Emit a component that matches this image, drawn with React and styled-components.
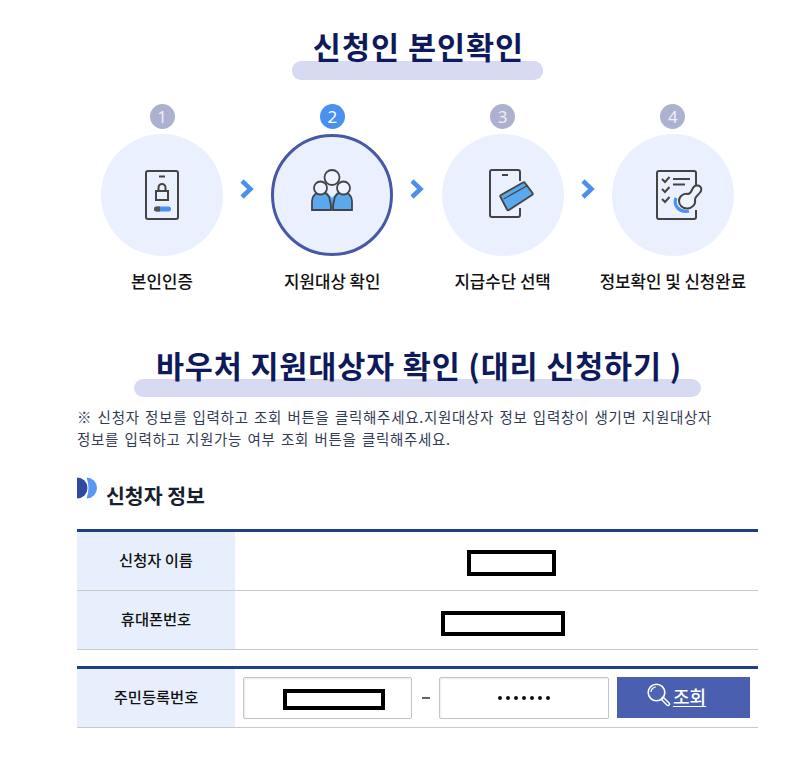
import React from "react";
import styled, { createGlobalStyle } from "styled-components";

const Global = createGlobalStyle`
  html, body { margin: 0; padding: 0; background: #fff; }
  body { font-family: "Noto Sans CJK KR", "Noto Sans", sans-serif; color: #111; }
`;
const Page = styled.div`
  width: 800px; height: 759px; overflow: hidden; box-sizing: border-box;
  padding: 26px 42px 0 77px; display: flex; flex-direction: column;
`;
const TitleWrap = styled.div`
  display: flex; flex-direction: column; align-items: center; margin-top: ${p => p.$top || 0}px;
`;
const Title = styled.h2`
  margin: 0 0 0 ${p => p.$ml || 0}px; font-size: ${p => p.$size}px; line-height: 40px; font-weight: 700; color: #0e1a5c;
  letter-spacing: ${p => p.$ls}px; white-space: nowrap; position: relative; z-index: 1;
`;
const Pill = styled.div`
  width: ${p => p.$w}px; height: ${p => p.$h}px; border-radius: 9px; background: #d7daf0;
  margin-top: ${p => p.$mt}px;
`;
const Steps = styled.div`
  display: flex; align-items: flex-start; margin: 24px 0 0 24px;
`;
const Step = styled.div`
  width: 122px; display: flex; flex-direction: column; align-items: center;
`;
const Badge = styled.div`
  width: 25px; height: 25px; border-radius: 50%; background: ${p => p.$on ? "#4a90f0" : "#acb1cf"};
  color: ${p => p.$on ? "#fff" : "#eceef8"}; font-size: 17px; line-height: 25px; text-align: center;
  font-family: "Noto Sans", sans-serif; margin-bottom: 5px;
`;
const Circle = styled.div`
  width: 122px; height: 122px; box-sizing: border-box; border-radius: 50%; background: #ebf0fe;
  border: ${p => p.$on ? "3px solid #4658a6" : "none"};
  display: flex; align-items: center; justify-content: center;
`;
const IconSlot = styled.div`
  display: flex; margin: ${p => p.$m || 0};
`;
const StepLabel = styled.div`
  margin-top: 13px; font-size: 16.8px; line-height: 24px; font-weight: 500; color: #111; white-space: nowrap;
`;
const Arrow = styled.div`
  width: 48.3px; height: 24px; margin-top: 74px; display: flex; justify-content: center; flex-shrink: 0;
`;
const Note = styled.p`
  margin: 9px 0 0; width: 645px; font-size: 14.5px; line-height: 22px; color: #333c55;
  letter-spacing: 0.68px; word-spacing: 1.5px;
`;
const SectionHead = styled.div`
  display: flex; align-items: flex-start; margin-top: 27px; height: 52px; gap: 8px;
`;
const SectionTitle = styled.h3`
  margin: 3px 0 0; font-size: 20.5px; line-height: 30px; font-weight: 700; color: #17202e;
`;
const Table = styled.div`
  border-top: 3px solid #1f3f84; margin-top: ${p => p.$mt || 0}px;
`;
const Row = styled.div`
  display: flex; height: ${p => p.$h}px; box-sizing: border-box; border-bottom: 1px solid #c9c9c9;
`;
const Head = styled.div`
  width: 158px; flex-shrink: 0; background: #e8effc; display: flex; align-items: center; justify-content: center;
  font-size: 15.3px; font-weight: 500; color: #111; padding-bottom: 4px; box-sizing: border-box;
`;
const Cell = styled.div`
  flex: 1; display: flex; align-items: center; justify-content: center;
  padding: ${p => p.$pt || 0}px 0 0 ${p => p.$pl || 0}px;
`;
const Redact = styled.div`
  width: ${p => p.$w}px; height: ${p => p.$h}px; box-sizing: border-box; border: 4px solid #000; background: #fff;
  margin: ${p => p.$mt || 0}px 0 0 ${p => p.$ml || 0}px;
`;
const FormCell = styled.div`
  flex: 1; display: flex; align-items: center; padding: 0 8px 0 8px;
`;
const InputBox = styled.div`
  width: ${p => p.$w}px; height: 42px; box-sizing: border-box; border: 1px solid #c4c4c4; border-radius: 2px;
  background: #fff; box-shadow: inset 1px 1px 2px rgba(0,0,0,.08);
  display: flex; align-items: center; justify-content: center;
`;
const Dash = styled.div`
  width: 27px; display: flex; justify-content: center; flex-shrink: 0;
  &::before { content: ""; width: 8px; height: 2px; background: #666; }
`;
const Dots = styled.div`
  display: flex; gap: 3.5px;
`;
const Dot = styled.span`
  width: 4.5px; height: 4.5px; border-radius: 50%; background: #111;
`;
const Button = styled.button`
  width: 133px; height: 41px; margin: 0 0 2px 8px; border: none; background: #4a5fb0; color: #fff; padding: 0 14px 2px 0;
  display: flex; align-items: center; justify-content: center; gap: 2px;
  font: 500 18px "Noto Sans CJK KR", sans-serif;
`;
const ButtonText = styled.span`
  text-decoration: underline; text-underline-offset: 2px; text-decoration-thickness: 1px;
`;

const Chevron = () => (
  <svg width="16" height="22" viewBox="0 0 16 22">
    <path d="M3 3l8.500 8-8.500 8" fill="none" stroke="#4a90ee" strokeWidth="4.500" />
  </svg>
);
const S = "#444";
const PhoneLock = () => (
  <svg width="34" height="51" viewBox="0 0 34 51" fill="none">
    <rect x="1" y="1" width="32" height="48" rx="2" stroke={S} strokeWidth="2" />
    <path d="M14 6.500h6" stroke={S} strokeWidth="2" />
    <rect x="11" y="21" width="12" height="9" stroke={S} strokeWidth="2" />
    <path d="M13.500 21v-3.500a3.500 3.500 0 0 1 7 0V21" stroke={S} strokeWidth="2" />
    <rect x="9" y="36.500" width="17" height="5" rx="2.500" fill="#4a90ee" />
    <path d="M11.500 36.500h3.500v5h-3.500a2.500 2.500 0 0 1 0-5z" fill="#555" />
  </svg>
);
const People = () => (
  <svg width="42" height="43" viewBox="0 0 42 43" fill="none" stroke={S} strokeWidth="1.800">
    <path d="M14 21l7 8 7-8 2 20H12z" fill="#5aa8ee" stroke="none" />
    <path d="M18 20l3 5 3-5z" fill="#eaf2ff" stroke="none" />
    <path d="M1 41V32a9 9 0 0 1 18 0c1 2 1 6 1 9z" fill="#5aa8ee" />
    <path d="M41 41V32a9 9 0 0 0-18 0c-1 2-1 6-1 9z" fill="#5aa8ee" />
    <circle cx="21" cy="8.500" r="7.500" fill="#eef3fe" />
    <circle cx="9.500" cy="19" r="6.500" fill="#eef3fe" />
    <circle cx="32.500" cy="19" r="6.500" fill="#eef3fe" />
  </svg>
);
const PhoneCard = () => (
  <svg width="45" height="50" viewBox="0 0 45 50" fill="none">
    <path d="M31 12V3a2 2 0 0 0-2-2H3a2 2 0 0 0-2 2v43a2 2 0 0 0 2 2h26a2 2 0 0 0 2-2v-7" stroke={S} strokeWidth="2" />
    <path d="M13 6h6" stroke={S} strokeWidth="2" />
    <path d="M12 26L34 13.500a1.500 1.500 0 0 1 2 .500l7.500 10a1.500 1.500 0 0 1-.500 2L20 41a1.500 1.500 0 0 1-2-.500L11.500 28a1.500 1.500 0 0 1 .500-2z" fill="#5aa8ee" stroke={S} strokeWidth="1.800" />
    <path d="M14.500 30L38.500 16.500" stroke={S} strokeWidth="1.200" />
  </svg>
);
const Checklist = () => (
  <svg width="47" height="50" viewBox="0 0 47 50" fill="none">
    <path d="M40 17V3a2 2 0 0 0-2-2H3a2 2 0 0 0-2 2v44a2 2 0 0 0 2 2h35a2 2 0 0 0 2-2V40" stroke={S} strokeWidth="2" />
    <g stroke={S} strokeWidth="2">
      <path d="M6 9l3 3 4.500-5M6 19l3 3 4.500-5M6 29l3 3 4.500-5" />
      <path d="M17 9h17M17 14.500h12" />
    </g>
    <path d="M20 28c-3 7 3 15 13 13" stroke="#4a90ee" strokeWidth="3.200" />
    <path d="M23 31c0-5 5-8 9-7 2 0 3-2 4-4 1-3 3-5 6-4.500 4 1 4 5 2 7-2 3-5 4-5 7 1 5-3 9-8 9-4 0-8-3-8-7.500z" fill="#eef3fe" stroke={S} strokeWidth="2" />
  </svg>
);
const Magnifier = () => (
  <svg width="24" height="26" viewBox="0 0 24 26" fill="none" stroke="#fff">
    <circle cx="9.500" cy="9.500" r="8.300" strokeWidth="1.600" fill="#4f64b4" />
    <path d="M4 9a5 5 0 0 1 5-5" strokeWidth="1.200" />
    <path d="M16 16l5 5" strokeWidth="4.500" strokeLinecap="round" />
    <path d="M16.500 16.500l4.500 4.500" stroke="#4a5fb0" strokeWidth="1.600" strokeLinecap="round" />
  </svg>
);
const Bullet = () => (
  <svg width="21" height="22" viewBox="0 0 21 22">
    <path d="M0 .500a10.500 10.500 0 0 1 0 21z" fill="#2f4a9e" />
    <path d="M9.500 .500a10.500 10.500 0 0 1 0 21q4-10.500 0-21z" fill="#5b97f5" />
  </svg>
);

const steps = [
  { n: 1, label: "본인인증", Icon: PhoneLock },
  { n: 2, label: "지원대상 확인", Icon: People, on: true, m: "0 0 9px 0" },
  { n: 3, label: "지급수단 선택", Icon: PhoneCard, m: "0 0 3px 18px" },
  { n: 4, label: "정보확인 및 신청완료", Icon: Checklist, m: "0 0 0 14px" },
];

export default function App() {
  return (
    <Page>
      <Global />
      <TitleWrap>
        <Title $size={30.5} $ls={1} $ml={2}>신청인 본인확인</Title>
        <Pill $w={251} $h={19} $mt={-5} />
      </TitleWrap>
      <Steps>
        {steps.map(({ n, label, Icon, on, m }, i) => (
          <React.Fragment key={n}>
            <Step>
              <Badge $on={on}>{n}</Badge>
              <Circle $on={on}><IconSlot $m={m}><Icon /></IconSlot></Circle>
              <StepLabel>{label}</StepLabel>
            </Step>
            {i < 3 && <Arrow><Chevron /></Arrow>}
          </React.Fragment>
        ))}
      </Steps>
      <TitleWrap $top={52}>
        <Title $size={30.5} $ls={0.85} $ml={3}>바우처 지원대상자 확인 (대리 신청하기 )</Title>
        <Pill $w={567} $h={18} $mt={-6} />
      </TitleWrap>
      <Note>※ 신청자 정보를 입력하고 조회 버튼을 클릭해주세요.지원대상자 정보 입력창이 생기면 지원대상자 정보를 입력하고 지원가능 여부 조회 버튼을 클릭해주세요.</Note>
      <SectionHead>
        <Bullet />
        <SectionTitle>신청자 정보</SectionTitle>
      </SectionHead>
      <Table>
        <Row $h={59}>
          <Head>신청자 이름</Head>
          <Cell $pl={30} $pt={4}><Redact $w={89} $h={26} /></Cell>
        </Row>
        <Row $h={59}>
          <Head>휴대폰번호</Head>
          <Cell $pl={12} $pt={6}><Redact $w={124} $h={25} /></Cell>
        </Row>
      </Table>
      <Table $mt={16}>
        <Row $h={59}>
          <Head>주민등록번호</Head>
          <FormCell>
            <InputBox $w={169}><Redact $w={102} $h={21} $ml={12} $mt={2} /></InputBox>
            <Dash />
            <InputBox $w={170}>
              <Dots>{Array.from({ length: 7 }, (_, i) => <Dot key={i} />)}</Dots>
            </InputBox>
            <Button><Magnifier /><ButtonText>조회</ButtonText></Button>
          </FormCell>
        </Row>
      </Table>
    </Page>
  );
}
